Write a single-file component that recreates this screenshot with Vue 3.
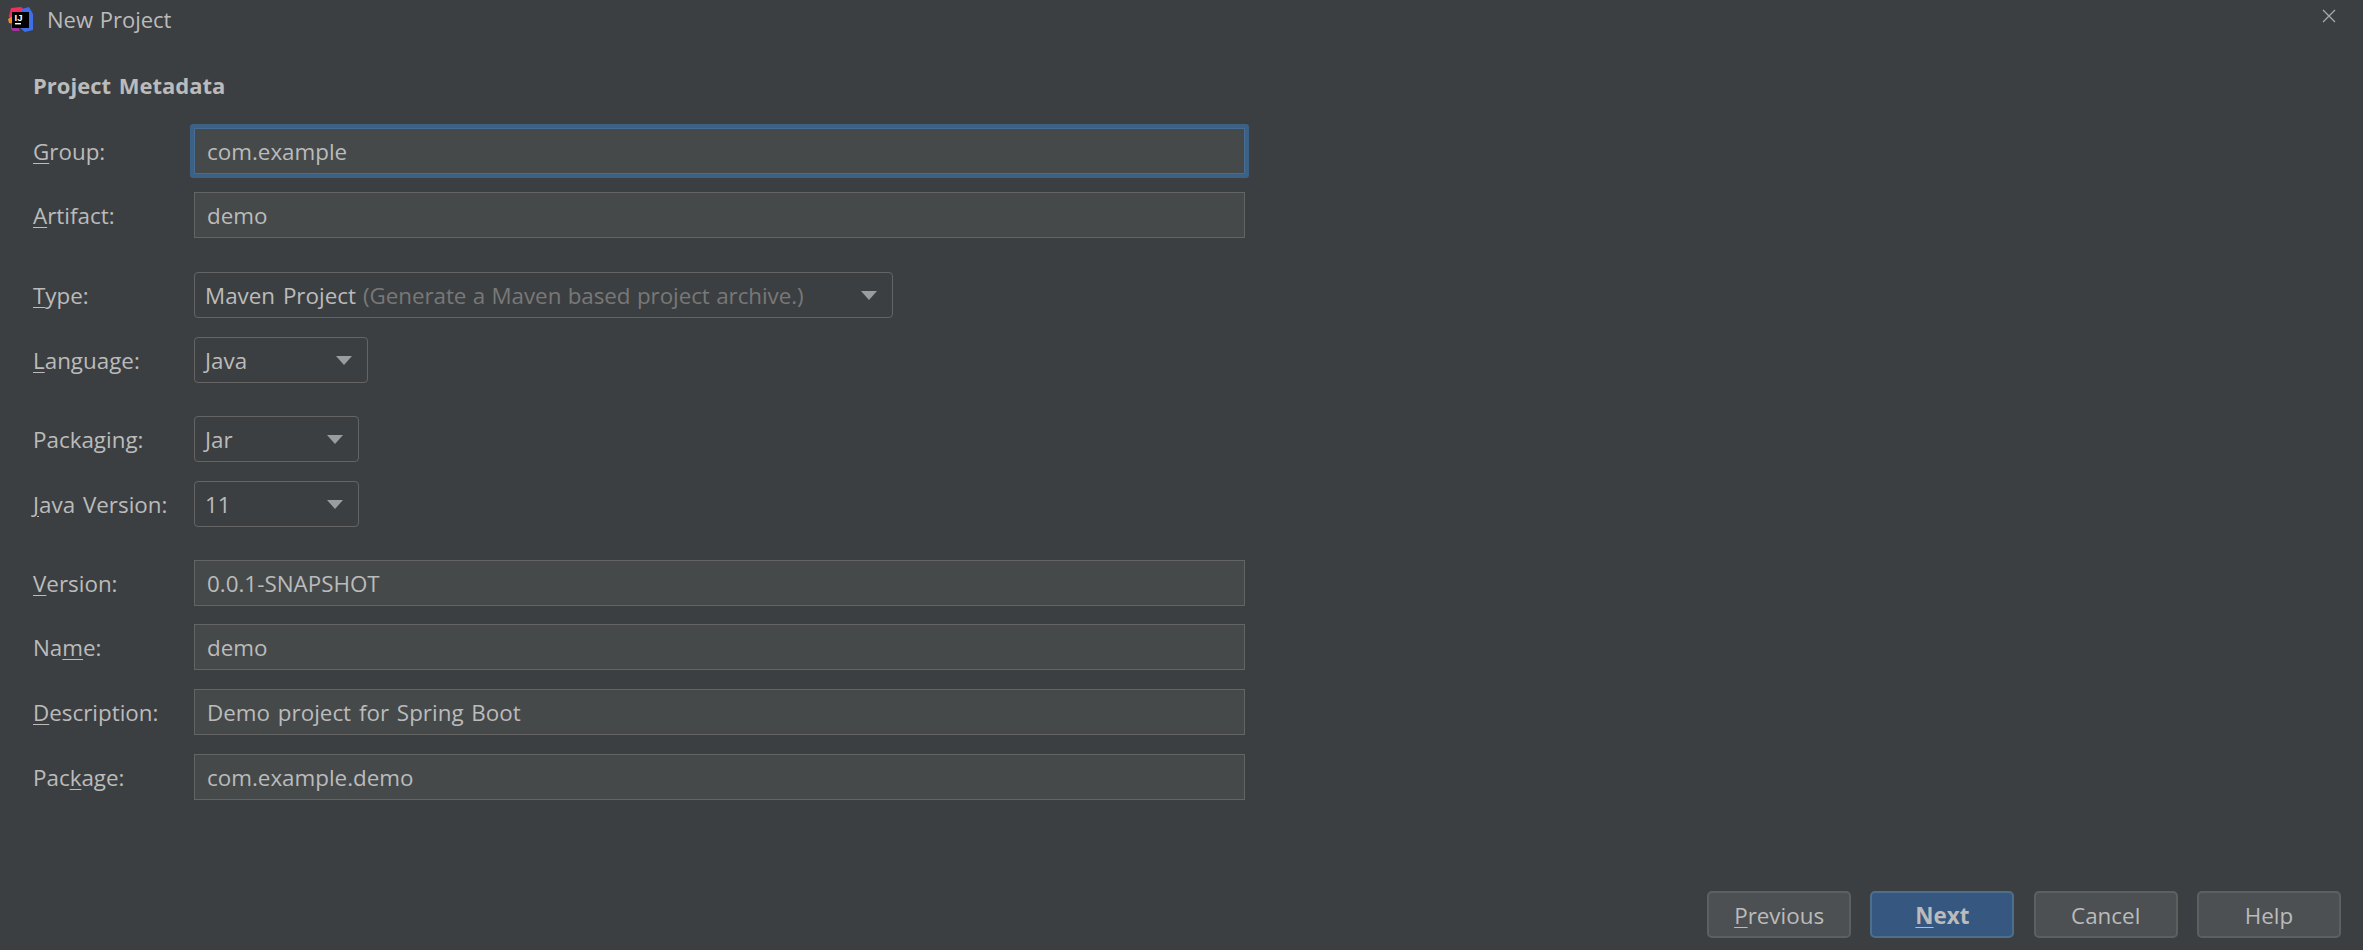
<script setup>
const sections = [
  { top: 0, gap: 18, rows: [
    { pre: '', key: 'G', post: 'roup:', value: 'com.example', focus: true },
    { pre: '', key: 'A', post: 'rtifact:', value: 'demo' },
  ] },
  { top: 34, gap: 19, rows: [
    { pre: '', key: 'T', post: 'ype:', value: 'Maven Project', hint: '(Generate a Maven based project archive.)', select: 'type' },
    { pre: '', key: 'L', post: 'anguage:', value: 'Java', select: 'lang' },
  ] },
  { top: 33, gap: 18.5, rows: [
    { pre: 'Packa', key: 'g', post: 'ing:', value: 'Jar', select: 'small' },
    { pre: '', key: 'J', post: 'ava Version:', value: '11', select: 'small' },
  ] },
  { top: 33, gap: 18.7, rows: [
    { pre: '', key: 'V', post: 'ersion:', value: '0.0.1-SNAPSHOT' },
    { pre: 'Na', key: 'm', post: 'e:', value: 'demo' },
    { pre: '', key: 'D', post: 'escription:', value: 'Demo project for Spring Boot' },
    { pre: 'Pac', key: 'k', post: 'age:', value: 'com.example.demo' },
  ] },
]
const buttons = [
  { pre: '', key: 'P', post: 'revious' },
  { pre: '', key: 'N', post: 'ext', primary: true },
  { pre: '', key: '', post: 'Cancel' },
  { pre: '', key: '', post: 'Help' },
]
</script>

<template>
  <div class="dialog">
    <header class="titlebar">
      <svg class="logo" width="26" height="26" viewBox="0 0 26 26">
        <polygon points="1,9 3,1 13,0 18,4 12,14 3,14" fill="#f0305c" />
        <polygon points="14,2 21,0 25,7 25,23 17,25 11,20" fill="#3f6fe8" />
        <polygon points="0,12 5,9 8,15 5,17 1,16" fill="#f58a1f" />
        <polygon points="3,16 9,18 12,24 5,24 3,22" fill="#a6329e" />
        <rect x="4" y="5" width="17" height="16" fill="#000" />
        <text x="6.5" y="13.5" class="logo-text">IJ</text>
        <rect x="7" y="16" width="6" height="1.4" fill="#fff" />
      </svg>
      <span class="title">New Project</span>
      <svg class="close" width="14" height="14" viewBox="0 0 14 14">
        <path d="M1 1 13 13M13 1 1 13" stroke="#a8a8a8" stroke-width="1.3" fill="none" />
      </svg>
    </header>

    <main class="form">
      <h1 class="heading">Project Metadata</h1>
      <section
        v-for="(section, i) in sections"
        :key="i"
        class="section"
        :style="{ marginTop: section.top + 'px', gap: section.gap + 'px' }"
      >
        <div v-for="row in section.rows" :key="row.post" class="row">
          <label class="label">{{ row.pre }}<u>{{ row.key }}</u>{{ row.post }}</label>
          <div v-if="row.select" class="select" :class="'select-' + row.select">
            <span class="value">{{ row.value }}<span v-if="row.hint" class="hint">{{ row.hint }}</span></span>
            <span class="arrow"></span>
          </div>
          <div v-else class="input" :class="{ focused: row.focus }">{{ row.value }}</div>
        </div>
      </section>
    </main>

    <footer class="footer">
      <button v-for="b in buttons" :key="b.post" class="btn" :class="{ primary: b.primary }">
        <u>{{ b.key }}</u>{{ b.post }}
      </button>
    </footer>
  </div>
</template>

<style>
html, body { margin: 0; background: #3c3f41; }
</style>

<style scoped>
.dialog {
  width: 2363px;
  height: 950px;
  background: #3c3f41;
  color: #bbbbbb;
  font-family: "Open Sans", "Noto Sans", sans-serif;
  font-size: 22.4px;
  word-spacing: 2px;
  display: flex;
  flex-direction: column;
  overflow: hidden;
}
.titlebar {
  height: 40px;
  display: flex;
  align-items: center;
  padding: 0 27px 0 8px;
  flex: none;
}
.logo { flex: none; margin-top: 0; }
.logo-text { font: 700 9.5px "Liberation Sans", sans-serif; fill: #fff; word-spacing: 0; }
.title { margin-left: 13px; font-size: 22px; word-spacing: 1px; line-height: 38px; margin-bottom: 2px; }
.close { margin-left: auto; margin-top: -8px; }
.form { padding: 0 0 0 33px; flex: 1; }
.heading {
  margin: 27px 0 25px;
  font-size: 22px;
  line-height: 36px;
  font-weight: 700;
}
.section { display: flex; flex-direction: column; }
.row { display: flex; align-items: center; height: 46px; }
.label { width: 161px; flex: none; padding-top: 1px; }
.label u, .btn u { text-underline-offset: 3px; text-decoration-thickness: 1px; }
.input, .select {
  box-sizing: border-box;
  height: 46px;
  border: 1px solid #646464;
  display: flex;
  align-items: center;
  padding-top: 1px;
}
.input {
  width: 1051px;
  background: #45494a;
  padding-left: 12px;
}
.input.focused {
  border-color: #466d94;
  box-shadow: 0 0 0 4px #3d6185;
  border-radius: 1px;
}
.select {
  border-radius: 4px;
  padding-left: 10px;
  padding-right: 15px;
  justify-content: space-between;
}
.select-type { width: 699px; }
.select-lang { width: 174px; }
.select-small { width: 165px; }
.hint { color: #787878; margin-left: 7px; word-spacing: 0.6px; letter-spacing: -0.05px; }
.arrow {
  width: 0;
  height: 0;
  border-left: 8px solid transparent;
  border-right: 8px solid transparent;
  border-top: 9px solid #9a9d9f;
}
.footer {
  flex: none;
  display: flex;
  justify-content: flex-end;
  gap: 19.3px;
  padding: 0 22px 12px 0;
}
.btn {
  width: 144px;
  height: 47px;
  box-sizing: border-box;
  background: #4c5052;
  border: 2px solid #5e6060;
  border-radius: 5px;
  color: #bbbbbb;
  font-family: inherit;
  font-size: 22.4px;
  padding: 1px 0 0;
}
.btn.primary {
  background: #365880;
  border-color: #4c708c;
  font-weight: 700;
}
</style>
